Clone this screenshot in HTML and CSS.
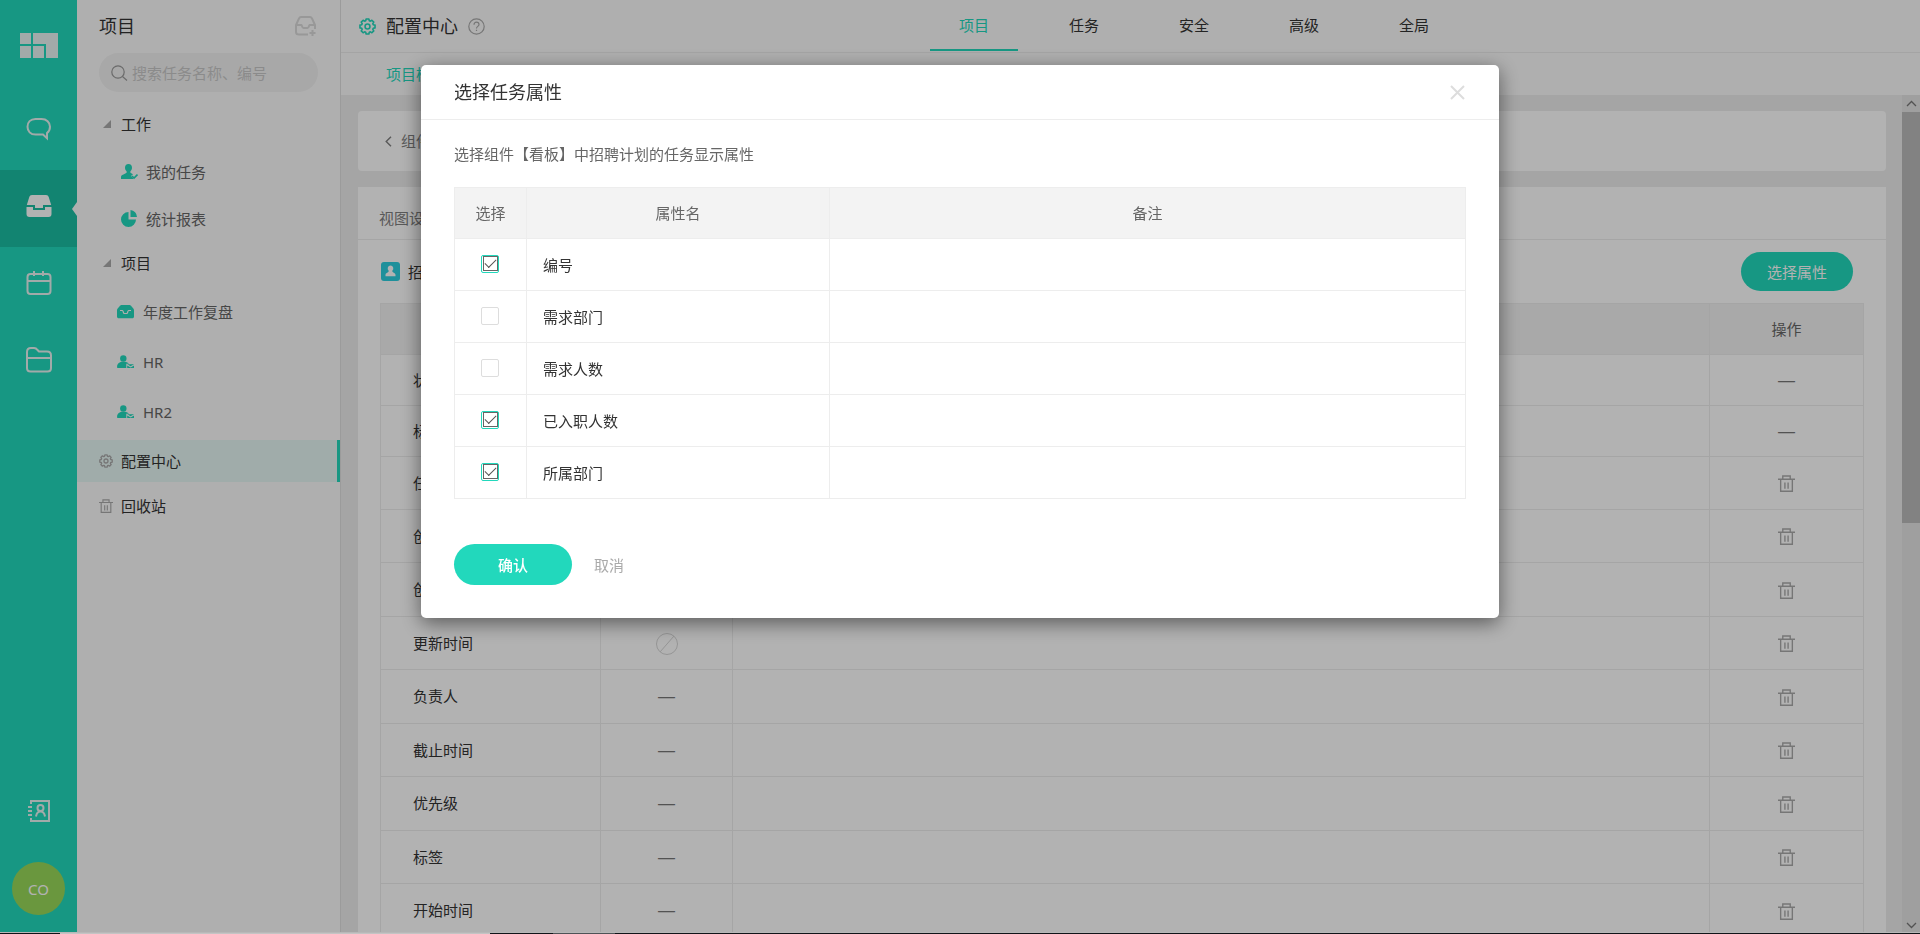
FILE: index.html
```html
<!DOCTYPE html>
<html lang="zh-CN">
<head>
<meta charset="utf-8">
<title>配置中心</title>
<link rel="stylesheet" href="styles.css">
</head>
<body>
<svg class="sprite" aria-hidden="true">
  <symbol id="gear" viewBox="0 0 16 16"><path fill="none" stroke="currentColor" stroke-width="1.500" stroke-linejoin="round" d="M6.300 2.600 6.700 .9H9.300L9.700 2.600 10.700 3 12.100 2.100 13.900 3.900 13 5.300 13.400 6.300 15.100 6.700V9.300L13.400 9.700 13 10.700 13.900 12.100 12.100 13.900 10.700 13 9.700 13.400 9.300 15.100H6.700L6.300 13.400 5.300 13 3.900 13.900 2.100 12.100 3 10.700 2.600 9.700 .9 9.300V6.700L2.600 6.300 3 5.300 2.100 3.900 3.900 2.100 5.300 3z"/><circle cx="8" cy="8" r="2.300" fill="none" stroke="currentColor" stroke-width="1.500"/></symbol>
  <symbol id="trash" viewBox="0 0 16 16"><path fill="none" stroke="currentColor" stroke-width="1.300" d="M0 4h16M4.500 4V1h7v3M2.500 4v11.300h11V4M6.500 7v6M9.500 7v6"/></symbol>
  <symbol id="member" viewBox="0 0 17 14"><circle cx="6.300" cy="3.500" r="3.200" fill="currentColor"/><path fill="currentColor" d="M4.300 6.800h4C10.500 7.300 11.500 8 11.800 8.800H9.300V13H.8C.3 13 0 12.700 0 12.200 0 9.200 1.800 7.300 4.300 6.800zM10.200 9.300h6.800l-3.400 2zM10.200 10.500l3.400 2 3.400-2V13h-6.800z"/></symbol>
</svg>

<div class="app">
  <nav class="rail" aria-label="主导航">
    <div class="rail-logo">
      <svg width="38" height="25" viewBox="0 0 38 25" fill="currentColor"><path d="M0 0h11v11H0zM13 0h25v25H26V11H13zM0 13h11v12H0zM13 13h11v12H13z"/></svg>
    </div>
    <button class="rail-item" aria-label="消息"><svg width="26" height="24" viewBox="0 0 26 24" fill="none" stroke="currentColor" stroke-width="2"><path d="M9.500 2h6C20.500 2 24 5.300 24 9.800c0 2.700-1.300 5-3 6.300v5.200l-4-3.700H9.500C4.500 17.600 1.500 14.300 1.500 9.800S4.500 2 9.500 2z"/></svg></button>
    <button class="rail-item rail-item--active" aria-label="项目"><svg width="26" height="24" viewBox="0 0 26 24" fill="currentColor"><path d="M6 1h14c1.500 0 2.300.8 2.700 2l2.500 8H17v3H9v-3H.8l2.500-8C3.700 1.800 4.500 1 6 1zM.5 13H7v3h12v-3h6.500v7c0 2-1 3-3 3h-19c-2 0-3-1-3-3z"/></svg></button>
    <button class="rail-item" aria-label="日历"><svg width="26" height="24" viewBox="0 0 26 24" fill="none" stroke="currentColor" stroke-width="2"><rect x="1.500" y="3" width="23" height="20" rx="3"/><path d="M1.500 10h23M8 0v5M17 0v5"/></svg></button>
    <button class="rail-item" aria-label="文件"><svg width="26" height="26" viewBox="0 0 26 26" fill="none" stroke="currentColor" stroke-width="2"><path d="M1 21V5c0-2.500 1.500-4 4-4h3c1.500 0 2.500.5 3.500 2l1.500 1.500h8c2.500 0 4 1.500 4 4V21c0 2-1 3.500-3.500 3.500h-17C2 24.500 1 23 1 21zM1 11h24"/></svg></button>
    <div class="rail-bottom">
      <button class="rail-contacts" aria-label="通讯录"><svg width="24" height="24" viewBox="0 0 24 24" fill="none" stroke="currentColor" stroke-width="2"><path d="M4 5V2h18v20H4v-3M1 8h4M1 12h4M1 16h4"/><circle cx="13.500" cy="9" r="3"/><path d="M9 17.500c.5-3 2-5 4.500-5s4 2 4.500 5"/></svg></button>
      <button class="avatar">CO</button>
    </div>
  </nav>

  <aside class="sidebar">
    <div class="sidebar-head">
      <h2>项目</h2>
      <button class="sidebar-add" aria-label="新建项目"><svg width="22" height="20" viewBox="0 0 22 20" fill="none" stroke="currentColor" stroke-width="2"><path d="M13 18.500H4c-2 0-3-1-3-2.500V9l3-6.500C4.500 1.500 5 1 6 1h9c1 0 1.500.5 2 1.500L20 9v4M1 9h5.500c.5 0 .5 3 2 3h4c1.500 0 1.500-3 2-3H20M14.500 17h6M17.500 14v6"/></svg></button>
    </div>
    <label class="search">
      <svg width="17" height="16" viewBox="0 0 17 16" fill="none" stroke="currentColor" stroke-width="1.200"><circle cx="7" cy="7" r="6.200"/><path d="M11.500 11.500l4.500 4"/></svg>
      <input type="text" placeholder="搜索任务名称、编号" aria-label="搜索">
    </label>
    <button class="tree-group"><i class="caret"></i>工作</button>
    <ul class="tree tree--work">
      <li><a href="#"><svg width="17" height="16" viewBox="0 0 17 16"><path fill="currentColor" d="M7.500 0C9.800 0 11 1.700 11 3.800c0 1.400-.6 2.700-1.600 3.500v1.500l2.600 1.400-2 1.800 2 2V15H0v-2c0-2.300 3.500-2.500 5.600-4.200V7.300C4.600 6.500 4 5.200 4 3.800 4 1.700 5.200 0 7.500 0z"/><path d="M11 12l2 2 3.500-3.500" fill="none" stroke="currentColor" stroke-width="1.600"/></svg>我的任务</a></li>
      <li><a href="#"><svg width="17" height="17" viewBox="0 0 17 17" fill="currentColor"><path d="M7.500 2v7.500H15A7.500 7.500 0 1 1 7.500 2zM9.500 0A7 7 0 0 1 16 7H9.500z"/></svg>统计报表</a></li>
    </ul>
    <button class="tree-group"><i class="caret"></i>项目</button>
    <ul class="tree tree--projects">
      <li><a href="#"><svg width="17" height="14" viewBox="0 0 17 14"><path fill="currentColor" d="M5 0h7c1 0 1.500.2 2 .8l2.500 3c.4.500.5 1 .5 1.500v6.200c0 1-.7 1.800-1.800 1.800H1.800C.7 13.300 0 12.500 0 11.500V5.300c0-.5.1-1 .5-1.500L3 .8C3.500.2 4 0 5 0z"/><path d="M3 5.500h2.500c.8 0 .6 3 1.800 3h2.400c1.200 0 1-3 1.800-3H14" fill="none" stroke="#fbfbfb" stroke-width="1.200"/></svg>年度工作复盘</a></li>
      <li><a href="#"><svg width="17" height="14"><use href="#member"/></svg>HR</a></li>
      <li><a href="#"><svg width="17" height="14"><use href="#member"/></svg>HR2</a></li>
    </ul>
    <a class="side-link side-link--active" href="#"><svg width="14" height="14"><use href="#gear"/></svg>配置中心</a>
    <a class="side-link" href="#"><svg width="14" height="14"><use href="#trash"/></svg>回收站</a>
  </aside>

  <main class="main">
    <header class="topbar">
      <div class="page-title">
        <svg class="teal" width="17" height="17"><use href="#gear"/></svg>
        <h1>配置中心</h1>
        <svg class="help" width="17" height="17" viewBox="0 0 17 17" fill="none" stroke="currentColor" stroke-width="1.200"><circle cx="8.500" cy="8.500" r="7.700"/><path d="M6 6.800c0-1.600 1-2.600 2.500-2.600s2.500 1 2.500 2.300c0 1.800-2.500 2-2.500 4M8.500 11.700v1.300"/></svg>
      </div>
      <nav class="tabs">
        <a class="tab tab--active" href="#">项目</a>
        <a class="tab" href="#">任务</a>
        <a class="tab" href="#">安全</a>
        <a class="tab" href="#">高级</a>
        <a class="tab" href="#">全局</a>
      </nav>
    </header>
    <nav class="subnav"><a href="#">项目模板</a></nav>
    <div class="scroller">
      <div class="content">
        <section class="crumb">
          <svg width="7" height="11" viewBox="0 0 7 11" fill="none" stroke="currentColor" stroke-width="1.400"><path d="M6 .7L1.200 5.500 6 10.300"/></svg>
          <a href="#">组件设置</a>
        </section>
        <section class="panel">
          <h3 class="panel-head">视图设置</h3>
          <div class="panel-tools">
            <svg width="19" height="19" viewBox="0 0 19 19"><rect width="19" height="19" rx="3" fill="#2bcedf"/><path fill="#fff" d="M9.500 3.500a2.800 3 0 0 1 1.700 5.400c.2 1.600 3.300 1.800 3.300 3.800v1.500h-10v-1.500c0-2 3.100-2.200 3.300-3.800a2.800 3 0 0 1 1.700-5.400z"/></svg>
            <span>招聘计划</span>
            <button class="pill">选择属性</button>
          </div>
          <table class="grid attrs">
            <colgroup><col class="col-name"><col class="col-req"><col><col class="col-op"></colgroup>
            <thead><tr><th>属性名</th><th>必填</th><th>备注</th><th>操作</th></tr></thead>
            <tbody>
              <tr><td>状态</td><td>—</td><td></td><td>—</td></tr>
              <tr><td>标题</td><td>—</td><td></td><td>—</td></tr>
              <tr><td>任务类型</td><td>—</td><td></td><td><button aria-label="删除"><svg width="17" height="17"><use href="#trash"/></svg></button></td></tr>
              <tr><td>创建人</td><td>—</td><td></td><td><button aria-label="删除"><svg width="17" height="17"><use href="#trash"/></svg></button></td></tr>
              <tr><td>创建时间</td><td>—</td><td></td><td><button aria-label="删除"><svg width="17" height="17"><use href="#trash"/></svg></button></td></tr>
              <tr><td>更新时间</td><td><svg class="none" width="22" height="22" viewBox="0 0 22 22" fill="none" stroke="currentColor"><circle cx="11" cy="11" r="10.500"/><path d="M4 19L18 3"/></svg></td><td></td><td><button aria-label="删除"><svg width="17" height="17"><use href="#trash"/></svg></button></td></tr>
              <tr><td>负责人</td><td>—</td><td></td><td><button aria-label="删除"><svg width="17" height="17"><use href="#trash"/></svg></button></td></tr>
              <tr><td>截止时间</td><td>—</td><td></td><td><button aria-label="删除"><svg width="17" height="17"><use href="#trash"/></svg></button></td></tr>
              <tr><td>优先级</td><td>—</td><td></td><td><button aria-label="删除"><svg width="17" height="17"><use href="#trash"/></svg></button></td></tr>
              <tr><td>标签</td><td>—</td><td></td><td><button aria-label="删除"><svg width="17" height="17"><use href="#trash"/></svg></button></td></tr>
              <tr><td>开始时间</td><td>—</td><td></td><td><button aria-label="删除"><svg width="17" height="17"><use href="#trash"/></svg></button></td></tr>
            </tbody>
          </table>
        </section>
      </div>
      <div class="scrollbar" aria-hidden="true">
        <svg width="18" height="17" viewBox="0 0 18 17" fill="none" stroke="currentColor" stroke-width="1.300"><path d="M5 11l4.500-4.500L14 11"/></svg>
        <div class="thumb"></div>
        <svg width="18" height="17" viewBox="0 0 18 17" fill="none" stroke="currentColor" stroke-width="1.300"><path d="M5 6l4.500 4.500L14 6"/></svg>
      </div>
    </div>
  </main>
</div>

<div class="backdrop"></div>
<div class="bottom-strip"></div>

<div class="modal" role="dialog" aria-modal="true" aria-labelledby="dlg-title">
  <div class="modal-head">
    <h2 id="dlg-title">选择任务属性</h2>
    <button class="close" aria-label="关闭"><svg width="15" height="15" viewBox="0 0 15 15" fill="none" stroke="currentColor" stroke-width="2"><path d="M1 1l13 13M14 1L1 14"/></svg></button>
  </div>
  <form class="modal-body">
    <p>选择组件【看板】中招聘计划的任务显示属性</p>
    <table class="grid picker">
      <colgroup><col class="col-check"><col class="col-attr"><col></colgroup>
      <thead><tr><th>选择</th><th>属性名</th><th>备注</th></tr></thead>
      <tbody>
        <tr><td><input type="checkbox" id="a1" checked></td><td><label for="a1">编号</label></td><td></td></tr>
        <tr><td><input type="checkbox" id="a2"></td><td><label for="a2">需求部门</label></td><td></td></tr>
        <tr><td><input type="checkbox" id="a3"></td><td><label for="a3">需求人数</label></td><td></td></tr>
        <tr><td><input type="checkbox" id="a4" checked></td><td><label for="a4">已入职人数</label></td><td></td></tr>
        <tr><td><input type="checkbox" id="a5" checked></td><td><label for="a5">所属部门</label></td><td></td></tr>
      </tbody>
    </table>
    <div class="modal-actions">
      <button type="button" class="confirm">确认</button>
      <button type="button" class="cancel">取消</button>
    </div>
  </form>
</div>
</body>
</html>
```
FILE: styles.css
```css
:root {
  --teal: #22d8bc;
  --line: #ededed;
}

* { box-sizing: border-box; }

body {
  margin: 0;
  font: 15px/20px "Noto Sans", "Noto Sans CJK SC", sans-serif;
  color: #333;
}

h1, h2, h3, p, ul { margin: 0; padding: 0; font-weight: 400; }
h1, h2 { font-size: 18px; line-height: 24px; }
h3 { font-size: 15px; }
ul { list-style: none; }
a { color: inherit; text-decoration: none; }
svg { display: block; flex: none; }
button {
  padding: 0;
  border: 0;
  background: none;
  font: inherit;
  color: inherit;
}

.sprite { position: absolute; width: 0; height: 0; }
.teal { color: var(--teal); }

.app { display: flex; height: 100vh; overflow: hidden; }

/* icon rail */
.rail {
  display: flex;
  flex-direction: column;
  flex: none;
  width: 77px;
  background: var(--teal);
  color: #e9f4f2;
}
.rail-logo {
  display: flex;
  justify-content: center;
  height: 93px;
  padding-top: 33px;
}
.rail-item {
  position: relative;
  display: flex;
  align-items: center;
  justify-content: center;
  height: 77px;
  padding-bottom: 5px;
}
.rail-item--active { background: #1abea3; color: #fff; }
.rail-item--active::after {
  content: "";
  position: absolute;
  right: 0;
  top: 32px;
  border: 7px solid transparent;
  border-left-width: 0;
  border-right: 5px solid #fbfbfb;
}
.rail-bottom {
  display: flex;
  flex-direction: column;
  align-items: center;
  gap: 39px;
  margin-top: auto;
  padding-bottom: 19px;
}
.avatar {
  width: 53px;
  height: 53px;
  border-radius: 50%;
  background: #99d95a;
  color: #fff;
}

/* sidebar */
.sidebar {
  flex: none;
  width: 264px;
  border-right: 1px solid #dedede;
  background: #fbfbfb;
}
.sidebar-head {
  display: flex;
  justify-content: space-between;
  align-items: center;
  height: 53px;
  padding: 0 23px 1px 22px;
}
.sidebar-add { color: #dadada; }
.search {
  display: flex;
  align-items: center;
  gap: 4px;
  height: 39px;
  margin: 0 22px 11px;
  padding: 0 12px;
  border-radius: 20px;
  background: #f1f1f1;
  color: #999;
}
.search input {
  flex: 1;
  min-width: 0;
  border: 0;
  padding: 0;
  background: none;
  font: inherit;
  outline: 0;
}
.search input::placeholder { color: #c8c8c8; }
.tree-group {
  display: flex;
  align-items: center;
  gap: 10px;
  width: 100%;
  height: 42px;
  padding-left: 26px;
}
.caret {
  border: 4px solid transparent;
  border-right-color: #aaa;
  border-bottom-color: #aaa;
}
.tree a { display: flex; align-items: center; gap: 8px; color: #666; }
.tree svg { color: var(--teal); }
.tree--work { margin-top: 3px; }
.tree--work a { height: 47px; padding-left: 44px; }
.tree--projects { margin-top: 3px; }
.tree--projects a { height: 50px; gap: 9px; padding-left: 40px; }
.side-link {
  display: flex;
  align-items: center;
  gap: 8px;
  height: 42px;
  margin-top: 3px;
  padding-left: 22px;
}
.side-link svg { color: #aaa; }
.side-link--active {
  border-right: 3px solid var(--teal);
  background: #e6f7f4;
}

/* main area */
.main { display: flex; flex: 1; flex-direction: column; min-width: 0; }
.topbar {
  display: flex;
  flex: none;
  height: 53px;
  border-bottom: 1px solid #ebebeb;
  background: #fbfbfb;
}
.page-title {
  display: flex;
  align-items: center;
  gap: 10px;
  width: 589px;
  padding-left: 18px;
}
.help { color: #aaa; }
.tabs { display: flex; gap: 22px; }
.tab {
  width: 88px;
  height: 51px;
  border-bottom: 2px solid transparent;
  line-height: 50px;
  text-align: center;
}
.tab--active { border-color: var(--teal); color: var(--teal); }
.subnav {
  flex: none;
  height: 42px;
  padding-left: 45px;
  background: #fbfbfb;
  line-height: 42px;
  color: var(--teal);
}
.scroller { display: flex; flex: 1; min-height: 0; background: #ededed; }
.content { flex: 1; min-width: 0; padding: 16px 16px 0 17px; overflow: hidden; }
.crumb {
  display: flex;
  align-items: center;
  gap: 9px;
  height: 60px;
  margin-bottom: 16px;
  padding-left: 27px;
  border-radius: 4px;
  background: #fff;
  color: #808080;
}
.panel { background: #fff; }
.panel-head {
  height: 53px;
  padding: 10px 21px 0;
  border-bottom: 1px solid var(--line);
  line-height: 42px;
  color: #808080;
}
.panel-tools {
  display: flex;
  align-items: center;
  gap: 8px;
  height: 63px;
  padding: 0 33px 0 23px;
}
.pill {
  width: 112px;
  height: 39px;
  margin-left: auto;
  border-radius: 20px;
  background: var(--teal);
  color: #fff;
}

/* tables */
.grid { border-collapse: collapse; table-layout: fixed; }
.grid th, .grid td { padding: 0; border: 1px solid var(--line); text-align: center; }
.grid th { height: 51px; background: #f3f3f3; font-weight: 400; color: #666; }

.attrs { width: calc(100% - 44px); margin: 0 22px; }
.attrs td {
  height: 53px;
  padding-top: 1px;
  font-family: "Liberation Sans", "Noto Sans CJK SC", sans-serif;
  font-size: 17px;
  color: #777;
}
.attrs tr:nth-child(-n+2) td { height: 51px; }
.attrs tr:nth-child(n+5):nth-child(odd) td { height: 54px; }
.attrs td:first-child {
  padding-left: 32px;
  text-align: left;
  font-size: 15px;
  color: #333;
}
.attrs td svg { margin: 0 auto; color: #aaa; }
.attrs td button { display: block; margin: 0 auto; }
.attrs .none { color: #d6d6d6; }
.col-name { width: 220px; }
.col-req { width: 132px; }
.col-op { width: 154px; }

.scrollbar {
  display: flex;
  flex-direction: column;
  flex: none;
  width: 18px;
  background: #e4e4e4;
  color: #777;
}
.thumb { height: 411px; margin-bottom: auto; background: #bababa; }

/* dialog */
.backdrop { position: fixed; inset: 0; background: rgba(0, 0, 0, .3); }
.bottom-strip {
  position: fixed;
  left: 0;
  right: 0;
  bottom: 0;
  height: 2px;
  border-top: 1px solid #b8b8b8;
  background: linear-gradient(90deg, #101418 60px, #c4c4c4 60px 490px, #101418 490px 553px, #4d5356 553px 615px, #101418 615px);
}
.modal {
  position: fixed;
  top: 65px;
  left: 50%;
  width: 1078px;
  margin-left: -539px;
  border-radius: 5px;
  background: #fff;
  box-shadow: 0 5px 20px rgba(0, 0, 0, .5);
}
.modal-head {
  display: flex;
  align-items: center;
  justify-content: space-between;
  height: 55px;
  padding: 0 34px 0 33px;
  border-bottom: 1px solid var(--line);
}
.close { color: #ddd; }
.modal-body { padding: 24px 33px 33px; }
.modal-body p { margin-bottom: 23px; color: #666; }
.picker { width: 100%; }
.picker td { height: 52px; }
.picker td:first-child { padding: 0 2px 2px 0; }
.picker td:nth-child(2) { padding-left: 16px; text-align: left; }
.col-check { width: 72px; }
.col-attr { width: 303px; }
.picker input {
  appearance: none;
  display: block;
  width: 18px;
  height: 18px;
  margin: 0 auto;
  border: 1px solid #ddd;
  border-radius: 2px;
}
.picker input:checked { position: relative; border-color: var(--teal); }
.picker input:checked::before {
  content: "";
  position: absolute;
  inset: 0 0 1px 1px;
  border: 1px solid #666;
}
.picker input:checked::after {
  content: "";
  position: absolute;
  left: 3px;
  top: 3px;
  width: 10px;
  height: 5px;
  border: solid #555;
  border-width: 0 0 1px 1px;
  transform: rotate(-45deg);
}
.modal-actions { display: flex; align-items: center; gap: 22px; margin-top: 45px; }
.confirm {
  width: 118px;
  height: 41px;
  border-radius: 21px;
  background: var(--teal);
  color: #fff;
  font-weight: 500;
}
.cancel { color: #aaa; }
```
